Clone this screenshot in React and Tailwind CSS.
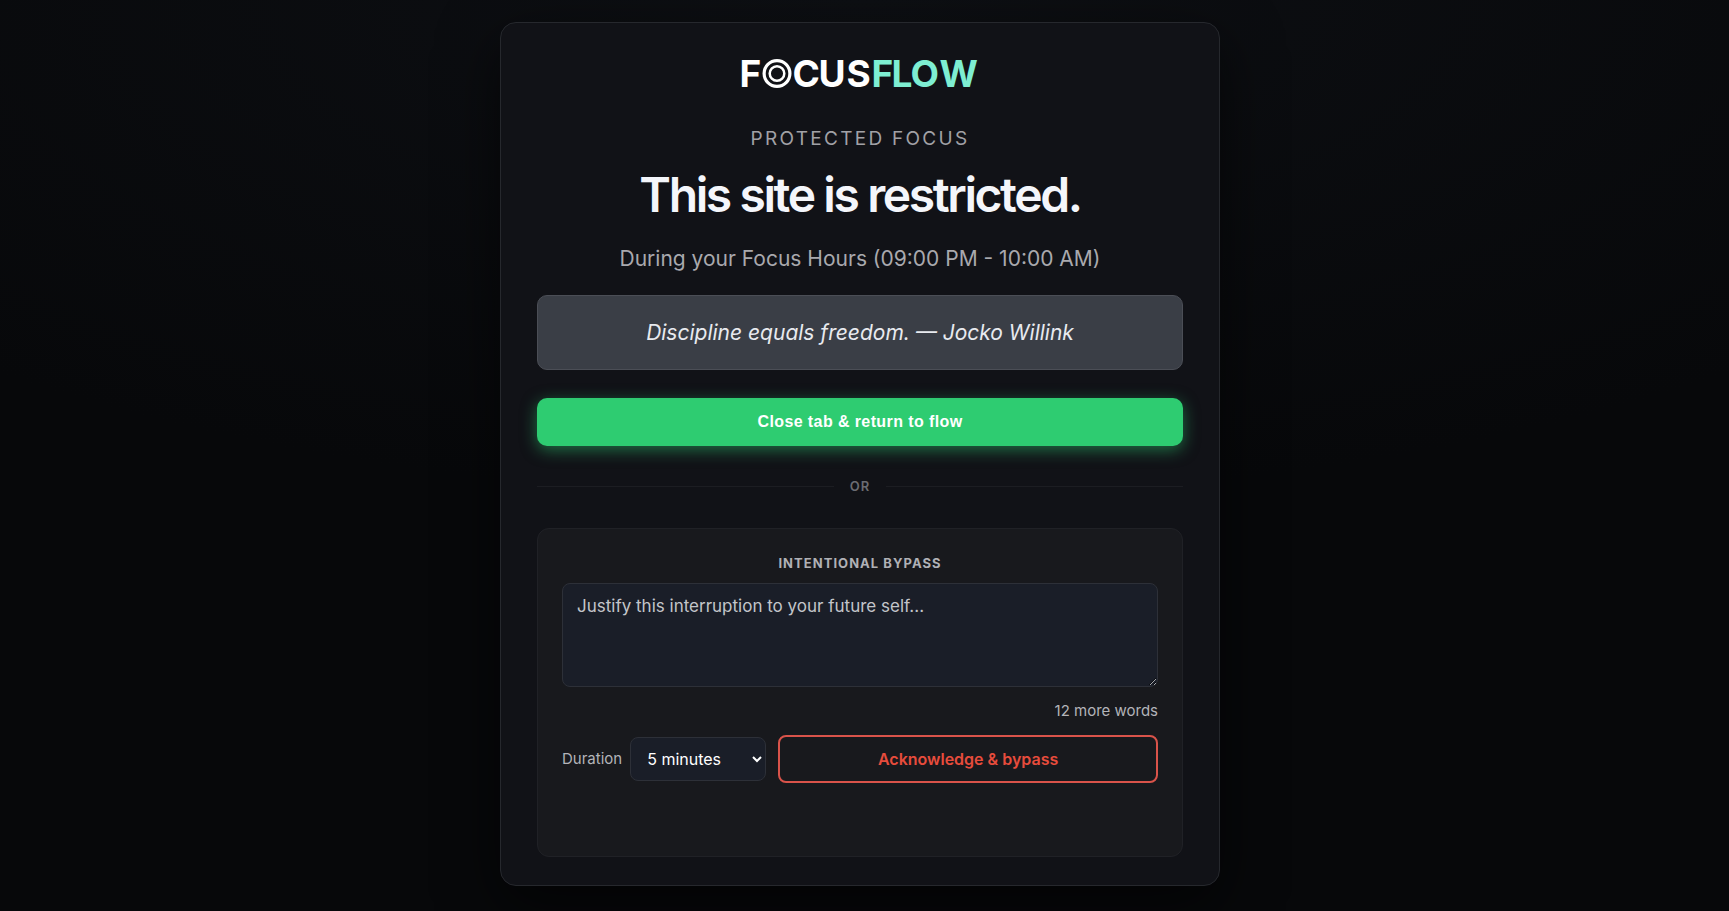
import React, { useState } from "react";

const MIN_WORDS = 12;

function Logo() {
  return (
    <svg
      role="img"
      aria-label="FocusFlow"
      width="248"
      height="48"
      viewBox="0 0 248 48"
      fontFamily="Inter, sans-serif"
      fontSize="37"
      fontWeight="700"
    >
      <text x="3.5" y="36" fill="#ffffff">
        F
      </text>
      <circle cx="41" cy="22.5" r="12.9" fill="none" stroke="#ffffff" strokeWidth="3.2" />
      <circle cx="41" cy="22.5" r="7.3" fill="none" stroke="#ffffff" strokeWidth="2.5" />
      <text x="56.5 82.5 110.5" y="36" fill="#ffffff">
        CUS
      </text>
      <text x="135.5 155.5 174.5 203.5" y="36" fill="#7eeed2">
        FLOW
      </text>
    </svg>
  );
}

export default function App() {
  const [reason, setReason] = useState("");
  const [duration, setDuration] = useState("5");

  const words = reason.trim() ? reason.trim().split(/\s+/).length : 0;
  const remaining = Math.max(MIN_WORDS - words, 0);

  return (
    <div className="min-h-screen flex items-start justify-center pl-4 pr-[25px] pt-5.5 pb-6 bg-[#07080a] bg-[radial-gradient(1300px_500px_at_top,#0d0f13_0%,#07080a_100%)] font-[Inter,sans-serif]">
      <main className="w-full max-w-[720px] rounded-2xl border border-[#26282d] bg-[#111217] px-9 pt-7 pb-7 text-center shadow-[0_20px_60px_rgba(0,0,0,0.6)]">
        <div className="flex justify-center">
          <Logo />
        </div>

        <p className="mt-7 text-[19px] leading-6 tracking-[0.12em] text-[#a1a1a6]">
          PROTECTED FOCUS
        </p>
        <h1 className="mt-5 text-5xl font-semibold tracking-tighter text-[#f4f6fb]">
          This site is restricted.
        </h1>
        <p className="mt-6 text-[21px] leading-8 text-[#a9a9ae]">
          During your Focus Hours (09:00 PM - 10:00 AM)
        </p>

        <blockquote className="mt-5 rounded-[10px] border border-[#4b4e56] bg-[#3a3e46] px-6 py-5 text-[21px] leading-[33px] italic text-[#e8eaef]">
          Discipline equals freedom. — Jocko Willink
        </blockquote>

        <button
          type="button"
          className="mt-7 h-12 w-full rounded-[10px] bg-[#2ecc71] font-['Liberation_Sans',Arial,sans-serif] text-base font-bold tracking-wide text-white shadow-[0_4px_16px_rgba(46,204,113,0.5)]"
        >
          Close tab &amp; return to flow
        </button>

        <div className="mt-[30px] flex items-center gap-4 text-[13px] leading-5 font-semibold tracking-[0.08em] text-[#6b6c72]">
          <span className="h-px flex-1 bg-[#1c1d22]" />
          OR
          <span className="h-px flex-1 bg-[#1c1d22]" />
        </div>

        <section className="mt-8 rounded-xl border border-[#202126] bg-[#18191d] px-6 pt-6 pb-[73px]">
          <label
            htmlFor="reason"
            className="block text-[13px] leading-5 font-bold tracking-[0.08em] text-[#b0b1b6]"
          >
            INTENTIONAL BYPASS
          </label>
          <textarea
            id="reason"
            value={reason}
            onChange={(e) => setReason(e.target.value)}
            placeholder="Justify this interruption to your future self..."
            className="mt-2.5 block h-26 w-full resize-y rounded-lg border border-[#2d3038] bg-[#1a1e28] px-3.5 py-2.5 text-[17px] leading-6 text-white placeholder:text-[#c3c5ca]"
          />
          <p className="mt-3 text-right text-[15px] leading-6 text-[#b3b4b9]">
            {remaining} more words
          </p>

          <div className="mt-3 flex items-center gap-3">
            <div className="flex items-center gap-2">
              <label htmlFor="duration" className="text-[15px] text-[#b3b4b9]">
                Duration
              </label>
              <select
                id="duration"
                value={duration}
                onChange={(e) => setDuration(e.target.value)}
                className="h-11 w-34 rounded-lg border border-[#2d3038] bg-[#1a1e28] px-3 text-base text-white"
              >
                <option value="5">5 minutes</option>
                <option value="10">10 minutes</option>
                <option value="15">15 minutes</option>
              </select>
            </div>
            <button
              type="button"
              className="h-12 flex-1 rounded-lg border-2 border-[#d9534a] text-base font-semibold text-[#e74c3c]"
            >
              Acknowledge &amp; bypass
            </button>
          </div>
        </section>
      </main>
    </div>
  );
}
